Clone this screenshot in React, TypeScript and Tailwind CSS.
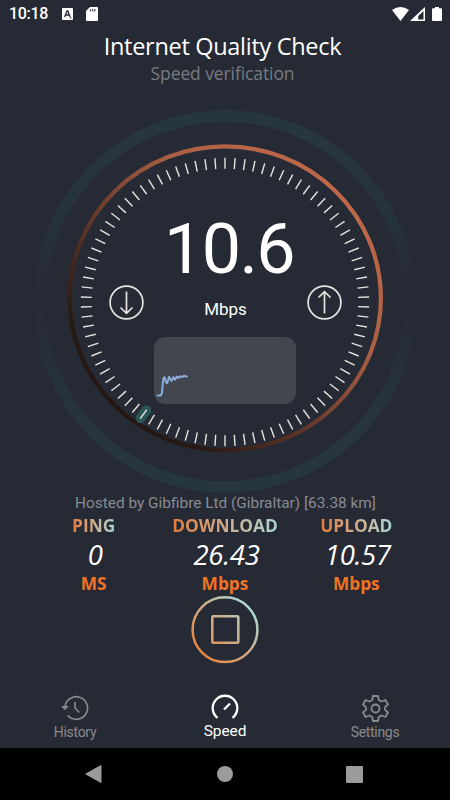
const ticks = Array.from({ length: 90 }, (_, i) => i * 4);

const stats = [
  { label: 'PING', value: '0', unit: 'MS' },
  { label: 'DOWNLOAD', value: '26.43', unit: 'Mbps' },
  { label: 'UPLOAD', value: '10.57', unit: 'Mbps' },
];

function StatusBar() {
  return (
    <div className="flex h-7 items-center justify-between pl-[9px] pr-2 text-white">
      <div className="flex items-center">
        <span className="w-[39px] whitespace-nowrap font-[Roboto,sans-serif] text-[16px] leading-7 font-medium tracking-[-0.3px]">10:18</span>
        <svg className="ml-[14px] h-[12px] w-[11px]" viewBox="0 0 11 12">
          <rect width="11" height="12" rx="1" fill="#fff" />
          <path d="M2.6 9 5 3h.8l2.3 6M3.5 7h3.8" fill="none" stroke="#262a34" strokeWidth="1.3" />
          <path d="M8 10h1.5" stroke="#262a34" />
        </svg>
        <svg className="ml-[13px] h-[14px] w-[12px]" viewBox="0 0 12 14">
          <path d="M4 0h7q1 0 1 1v12q0 1-1 1H1q-1 0-1-1V4z" fill="#fff" />
          <path d="M4.5 2v2.6M6.7 2v2.6M8.9 2v2.6" stroke="#555963" strokeWidth="1.3" />
        </svg>
      </div>
      <div className="flex items-center">
        <svg className="h-[14px] w-[17px]" viewBox="0 0 17 14">
          <path d="M0 3Q8.5-3 17 3L8.5 14z" fill="#fff" />
        </svg>
        <svg className="ml-[1px] h-[14px] w-[15px]" viewBox="0 0 15 14">
          <path fillRule="evenodd" d="M15 0v14H0zM13.5 4 8.2 9v3.5h5.3z" fill="#fff" />
        </svg>
        <svg className="ml-[7px] h-[14px] w-[10px]" viewBox="0 0 10 14">
          <path d="M3 0h4v1.3h2q1 0 1 1V13q0 1-1 1H1q-1 0-1-1V2.3q0-1 1-1h2z" fill="#fff" />
        </svg>
      </div>
    </div>
  );
}

function Dial() {
  return (
    <svg className="absolute inset-0 h-[401px] w-[450px]" viewBox="0 93 450 401">
      <defs>
        <linearGradient id="halo" x1="0" y1="0" x2="0" y2="1">
          <stop offset="0" stopColor="#27535a" stopOpacity="0.3" />
          <stop offset="0.25" stopColor="#27535a" stopOpacity="0.22" />
          <stop offset="0.5" stopColor="#27535a" stopOpacity="0" />
          <stop offset="0.75" stopColor="#27535a" stopOpacity="0.22" />
          <stop offset="1" stopColor="#27535a" stopOpacity="0.3" />
        </linearGradient>
        <linearGradient id="ring" x1="0.85" y1="0.15" x2="0.15" y2="0.85">
          <stop offset="0" stopColor="#bd6848" />
          <stop offset="0.3" stopColor="#a95f43" />
          <stop offset="0.65" stopColor="#5c3428" />
          <stop offset="0.9" stopColor="#2b1a15" />
          <stop offset="1" stopColor="#241713" />
        </linearGradient>
      </defs>
      <circle cx="225" cy="301.5" r="185.5" fill="none" stroke="url(#halo)" strokeWidth="11.5" />
      <ellipse cx="225.2" cy="298.3" rx="155.7" ry="151.9" fill="none" stroke="url(#ring)" strokeWidth="4.2" />
      <line x1="225" y1="168" x2="225" y2="158.5" transform="rotate(216 225 302)" stroke="#29645f" strokeOpacity="0.8" strokeWidth="10" strokeLinecap="round" />
      {ticks.map(deg => (
        <line key={deg} x1="225" y1="157.8" x2="225" y2="168.8" transform={`rotate(${deg} 225 302)`} stroke="#e6e4e1" strokeWidth="1.4" />
      ))}
    </svg>
  );
}

function DirectionIcon({ up = false }: { up?: boolean }) {
  return (
    <svg className={`h-[35px] w-[35px] ${up ? 'rotate-180' : ''}`} viewBox="0 0 35 35" fill="none" stroke="#e6e4e1" strokeWidth="1.7">
      <circle cx="17.5" cy="17.5" r="16.4" />
      <path d="M17.5 6.5V28M11.5 22.5l6 5.8 6-5.8" />
    </svg>
  );
}

function Gauge() {
  return (
    <section className="relative h-[401px]">
      <Dial />
      <div className="relative flex flex-col items-center pt-[116px] text-white">
        <div className="h-[76px] pl-[8px] font-[Roboto,sans-serif] text-[70px] leading-[80px] tracking-[-1.6px]">10.6</div>
        <div className="flex h-[35px] w-[233px] items-center justify-between">
          <DirectionIcon />
          <span className="pt-3 pl-px font-[Roboto,sans-serif] text-[17px] leading-6">Mbps</span>
          <DirectionIcon up />
        </div>
        <div className="mt-[17px] h-[67px] w-[142px] rounded-[11px] bg-[#42464e]">
          <svg className="h-[67px] w-[142px]" viewBox="154 337 142 67">
            <path
              d="M157.5 395.5h3.2l1.3-2.5.5-7 1-8 1-.8 1.5 5 1.2 1 1.8-6.5 2.500 4.200 2-3.800 1.500 2.500 2-3 2 1.200 1.500-1.500 2 .8 1.500-1.500 1.500.8h1.300"
              fill="none"
              stroke="#8aaddb"
              strokeWidth="2"
              strokeLinejoin="round"
              strokeLinecap="round"
            />
          </svg>
        </div>
      </div>
    </section>
  );
}

function Stats() {
  return (
    <div className="grid grid-cols-3 px-[28px] font-['Open_Sans',sans-serif]">
      {stats.map(({ label, value, unit }) => (
        <div key={label} className="flex flex-col items-center">
          <span className="bg-gradient-to-r from-[#e37b38] to-[#a8d6d2] bg-clip-text text-[17.3px] leading-[25px] font-bold text-transparent">{label}</span>
          <span className="pl-[3px] text-[27.5px] leading-[34px] font-normal tracking-[-0.3px] text-white italic">{value}</span>
          <span className="text-[17.3px] leading-[24px] font-bold text-[#f07325]">{unit}</span>
        </div>
      ))}
    </div>
  );
}

function StopButton() {
  return (
    <button className="mx-auto block h-[68px] w-[68px]" aria-label="Stop">
      <svg className="h-[68px] w-[68px]" viewBox="0 0 68 68" fill="none">
        <defs>
          <linearGradient id="stop" gradientUnits="userSpaceOnUse" x1="9" y1="58" x2="59" y2="10">
            <stop offset="0" stopColor="#e98440" />
            <stop offset="0.5" stopColor="#ceab83" />
            <stop offset="1" stopColor="#acd8d3" />
          </linearGradient>
        </defs>
        <circle cx="34" cy="33.7" r="32.4" stroke="url(#stop)" strokeWidth="2.5" />
        <rect x="21.3" y="20.3" width="26" height="26.5" rx="0.8" stroke="url(#stop)" strokeWidth="2.6" />
      </svg>
    </button>
  );
}

function BottomNav() {
  return (
    <nav className="grid h-[63px] grid-cols-3 font-[Roboto,sans-serif] text-[#888a8d]">
      <div className="flex flex-col items-center">
        <svg className="mt-[10px] h-[26px] w-[28px]" viewBox="0 0 28 26" fill="none" stroke="currentColor" strokeWidth="1.6">
          <path d="M4 12A11.3 11.3 0 1 1 6.600 20.300" />
          <path d="M.8 11.500h6.200l-3.100 3.200z" fill="currentColor" strokeWidth="1" />
          <path d="M14 7v6l4.300 4.500" />
        </svg>
        <span className="mt-px text-[14px] leading-5 tracking-[-0.3px]">History</span>
      </div>
      <div className="flex flex-col items-center text-white">
        <svg className="mt-[9px] h-[26px] w-[28px]" viewBox="0 0 28 26" fill="none" stroke="currentColor" strokeWidth="2.3">
          <path d="M6.500 23.800A12.300 12.300 0 1 1 21.500 23.800" />
          <path d="m13 15.500 6-6" />
        </svg>
        <span className="mt-px text-[15.5px] leading-5 tracking-[-0.1px]">Speed</span>
      </div>
      <div className="flex flex-col items-center">
        <svg className="mt-[10px] h-[27px] w-[27px]" viewBox="0 0 27 27" fill="none" stroke="currentColor" strokeWidth="1.8" strokeLinejoin="round">
          <path d="M11 1h5l.8 4 2.700 1.500L23.400 5 26 9.500 23 12.200v2.600l3 2.700-2.600 4.500-3.900-1.500L16.800 22l-.8 4h-5l-.8-4-2.700-1.500L3.600 22 1 17.500l3-2.700v-2.600L1 9.500 3.600 5l3.900 1.500L10.200 5z" />
          <circle cx="13.5" cy="13.5" r="4" />
        </svg>
        <span className="text-[14px] leading-5 tracking-[-0.3px]">Settings</span>
      </div>
    </nav>
  );
}

function SystemBar() {
  return (
    <div className="flex h-[52px] items-center justify-between bg-black pr-[87px] pl-[85px]">
      <svg className="h-[18px] w-[17px]" viewBox="0 0 17 18">
        <path d="M16 .5v17L.8 9z" fill="#9b9b9b" stroke="#9b9b9b" strokeLinejoin="round" />
      </svg>
      <span className="ml-px h-4 w-4 rounded-full bg-[#9b9b9b]" />
      <span className="h-[17px] w-[17px] rounded-[1px] bg-[#9b9b9b]" />
    </div>
  );
}

export default function App() {
  return (
    <main className="flex h-[800px] w-[450px] flex-col overflow-hidden bg-[#262a34]">
      <StatusBar />
      <header className="h-[65px] pt-[2px] text-center font-['Open_Sans',sans-serif]">
        <h1 className="pr-[5px] text-[23.5px] leading-[33px] tracking-[-0.3px] text-white">Internet Quality Check</h1>
        <p className="pr-[5px] text-[17.5px] leading-5 tracking-[-0.1px] text-[#777b82]">Speed verification</p>
      </header>
      <Gauge />
      <p className="h-[19px] pl-px text-center font-[Roboto,sans-serif] text-[15.4px] leading-[19px] text-[#888b91]">
        Hosted by Gibfibre Ltd (Gibraltar) [63.38 km]
      </p>
      <Stats />
      <StopButton />
      <div className="mt-auto">
        <BottomNav />
        <SystemBar />
      </div>
    </main>
  );
}
